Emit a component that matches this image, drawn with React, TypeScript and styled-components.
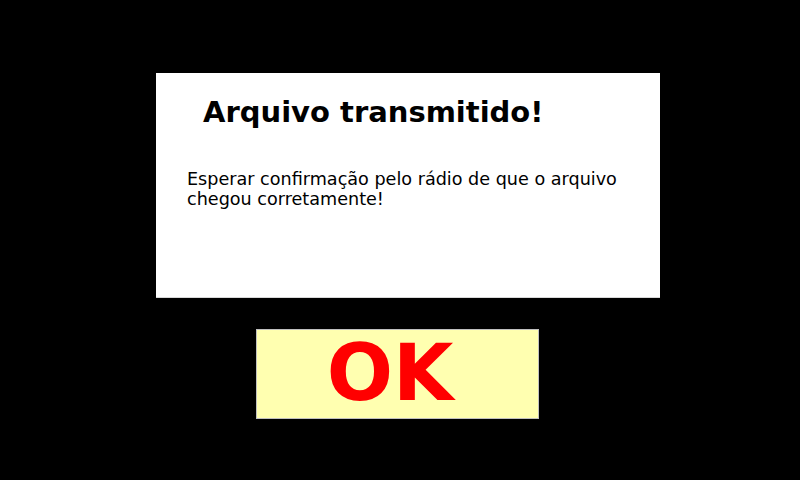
import React from "react";
import styled, { createGlobalStyle } from "styled-components";

const Global = createGlobalStyle`
  html, body { margin: 0; padding: 0; background: #000; }
  body { width: 800px; height: 480px; overflow: hidden; font-family: "DejaVu Sans", sans-serif; }
`;

const Screen = styled.div`
  width: 800px;
  height: 480px;
  background: #000;
  display: flex;
  flex-direction: column;
  align-items: center;
  padding-top: 73px;
  box-sizing: border-box;
`;

const Panel = styled.div`
  width: 504px;
  height: 225px;
  background: #fff;
  border-bottom: 1px solid #d8d8d8;
  box-sizing: border-box;
  margin-left: 16px;
  padding: 22px 0 0 47px;
`;

const Title = styled.h1`
  margin: 0;
  font-family: "DejaVu Sans", sans-serif;
  font-weight: bold;
  font-size: 29px;
  line-height: 34px;
  color: #000;
`;

const Message = styled.p`
  margin: 40px 0 0 -16px;
  font-family: "DejaVu Sans", sans-serif;
  font-size: 17.6px;
  line-height: 20px;
  color: #000;
  width: 460px;
`;

const OkButton = styled.button`
  margin-top: 31px;
  margin-right: 6px;
  width: 283px;
  height: 90px;
  background: #ffffb0;
  border: 1px solid #c0c0c0;
  box-sizing: border-box;
  padding: 0 14px 2px 0;
  font-family: "DejaVu Sans", sans-serif;
  font-weight: bold;
  font-size: 78px;
  line-height: 1;
  color: #ff0000;
  display: flex;
  align-items: center;
  justify-content: center;
`;

export default function App() {
  return (
    <>
      <Global />
      <Screen>
        <Panel>
          <Title>Arquivo transmitido!</Title>
          <Message>
            Esperar confirmação pelo rádio de que o arquivo chegou corretamente!
          </Message>
        </Panel>
        <OkButton>OK</OkButton>
      </Screen>
    </>
  );
}
